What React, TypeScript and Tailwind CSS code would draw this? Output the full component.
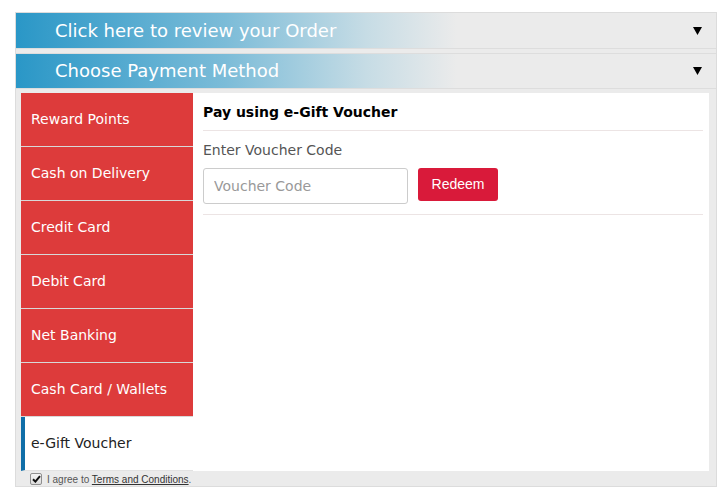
import React from "react";

const Arrow = () => (
  <svg width="9" height="8" viewBox="0 0 9 8" className="shrink-0">
    <polygon points="0,0 9,0 4.5,8" fill="#000" />
  </svg>
);

const tabs = [
  "Reward Points",
  "Cash on Delivery",
  "Credit Card",
  "Debit Card",
  "Net Banking",
  "Cash Card / Wallets",
];

export default function App() {
  return (
    <div
      className="w-[720px] h-[494px] bg-white pt-[12px] pl-[15px]"
      style={{ fontFamily: "'DejaVu Sans', Verdana, sans-serif" }}
    >
      <div className="w-[702px] h-[475px] border border-[#dcdcdc] bg-[#ebebeb] flex flex-col">
        {/* Header 1 */}
        <div className="h-[36px] shrink-0 border-b border-[#dddddd] flex items-center justify-between pl-[39px] pr-[14px] bg-[linear-gradient(to_right,#2a97c7_0%,#7cbcd8_30%,#c6dce5_50%,#ebebeb_63%)]">
          <span className="text-[18px] text-white leading-none">Click here to review your Order</span>
          <Arrow />
        </div>
        {/* Header 2 */}
        <div className="mt-[4px] shrink-0 border-t border-[#dddddd] h-[36px] border-b flex items-center justify-between pl-[39px] pr-[14px] bg-[linear-gradient(to_right,#2a97c7_0%,#7cbcd8_30%,#c6dce5_50%,#ebebeb_63%)]">
          <span className="text-[18px] text-white leading-none">Choose Payment Method</span>
          <Arrow />
        </div>
        {/* Content */}
        <div className="mt-[4px] ml-[5px] mr-[7px] flex h-[378px] shrink-0">
          <div className="w-[172px] flex flex-col">
            {tabs.map((t) => (
              <div
                key={t}
                className="h-[54px] bg-[#dd3b3b] border-b border-[#d8d8d8] flex items-center pl-[10px] text-[14px] text-white"
              >
                {t}
              </div>
            ))}
            <div className="h-[54px] bg-white border-b border-[#e2e2e2] border-l-[4px] border-l-[#0f6ea8] flex items-center pl-[6px] text-[14px] text-[#222]">
              e-Gift Voucher
            </div>
          </div>
          <div className="flex-1 bg-white pl-[10px] pr-[6px]">
            <div className="h-[38px] pt-[1px] flex items-center border-b border-[#ece4e4] text-[14px] font-bold text-black">
              Pay using e-Gift Voucher
            </div>
            <div className="mt-[9px] text-[14px] leading-[20px] text-[#555]">Enter Voucher Code</div>
            <div className="mt-[8px] flex items-start">
              <input
                placeholder="Voucher Code"
                className="w-[205px] h-[36px] border border-[#cccccc] rounded-[3px] px-[10px] text-[14px] text-[#555] placeholder:text-[#999] outline-none"
                style={{ fontFamily: "'DejaVu Sans', Verdana, sans-serif" }}
              />
              <button
                className="ml-[10px] w-[80px] h-[33px] bg-[#d91a3a] rounded-[3px] text-white text-[14px]"
                style={{ fontFamily: "'Liberation Sans', Arial, sans-serif" }}
              >
                Redeem
              </button>
            </div>
            <div className="mt-[10px] border-b border-[#ece4e4]" />
          </div>
        </div>
        {/* Footer */}
        <div
          className="flex items-center h-[15px] pl-[14px] text-[10px] text-[#555]"
          style={{ fontFamily: "'Liberation Sans', Arial, sans-serif" }}
        >
          <span className="w-[12px] h-[12px] border border-[#8f8f8f] rounded-[2px] bg-[linear-gradient(#f4f4f4,#dcdcdc)] flex items-center justify-center">
            <svg width="9" height="8" viewBox="0 0 9 8">
              <path d="M1 4.2 L3.4 6.6 L8 1.2" stroke="#111" strokeWidth="2" fill="none" />
            </svg>
          </span>
          <span className="ml-[5px] mt-[2px]">
            I agree to <span className="underline text-[#333]">Terms and Conditions</span>.
          </span>
        </div>
      </div>
    </div>
  );
}
